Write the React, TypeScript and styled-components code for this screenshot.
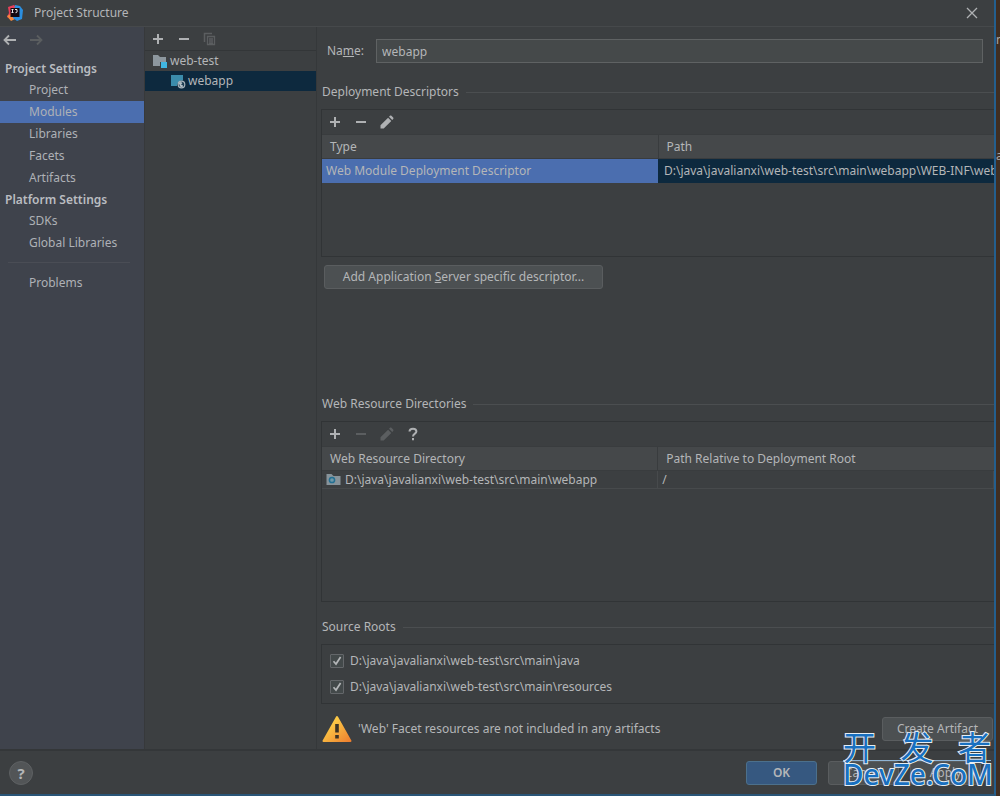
import React from "react";
import styled, { createGlobalStyle, css } from "styled-components";

const GlobalStyle = createGlobalStyle`
  * { box-sizing: border-box; }
  body {
    margin: 0;
    background: #3c3f41;
    color: #b4b6b8;
    font: 12px/18px "Noto Sans", "Noto Sans CJK SC", sans-serif;
  }
  button, input { font: inherit; color: inherit; }
  ul { list-style: none; margin: 0; padding: 0; }
`;

const Screen = styled.div`
  display: flex;
  min-height: 100vh;
  position: relative;
`;

const Dialog = styled.div`
  flex: 1;
  min-width: 0;
  display: flex;
  flex-direction: column;
  background: #3c3f41;
  border-right: 2px solid #245f8e;
  border-bottom: 2px solid #2a5577;
`;

const Backdrop = styled.div`
  display: flex;
  flex-direction: column;
  gap: 98px;
  width: 4px;
  overflow: hidden;
  background: #402e22;
  color: #a9a9a9;
  padding-top: 31px;
`;

const TitleBar = styled.header`
  height: 27px;
  display: flex;
  align-items: center;
  padding: 0 13px 0 6px;
  gap: 10px;
  border-bottom: 1px solid #46494b;
`;

const Title = styled.h1`
  flex: 1;
  margin: 0;
  font-size: 12px;
  font-weight: 400;
`;

const IconButton = styled.button`
  display: flex;
  align-items: center;
  justify-content: center;
  width: 18px;
  height: 18px;
  padding: 0;
  border: 0;
  background: none;
  color: #afb1b3;
  &:disabled { color: #5b5e60; }
`;

const Body = styled.div`
  flex: 1;
  display: flex;
`;

const Sidebar = styled.nav`
  width: 145px;
  flex: none;
  background: #3f434c;
  border-right: 1px solid #37393b;
`;

const History = styled.div`
  display: flex;
  gap: 8px;
  padding: 4px 0 0 1px;
`;

const GroupTitle = styled.h2<{ $first?: boolean }>`
  margin: ${(p) => (p.$first ? 10 : 1)}px 0 0;
  padding-left: 5px;
  font-size: 12px;
  line-height: 20px;
  font-weight: 600;
  color: #babdc1;
`;

const NavLink = styled.a<{ $active?: boolean }>`
  display: block;
  padding-left: 29px;
  line-height: 22px;
  color: #aeb1b6;
  text-decoration: none;
  ${(p) => p.$active && css`background: #4b6eaf;`}
`;

const NavDivider = styled.hr`
  margin: 8px 14px 9px 8px;
  border: 0;
  border-top: 1px solid #4a4d55;
`;

const TreePane = styled.section`
  width: 172px;
  flex: none;
  border-right: 1px solid #35383a;
`;

const Toolbar = styled.div<{ $tree?: boolean }>`
  display: flex;
  align-items: center;
  gap: 8px;
  height: 24px;
  padding-left: 4px;
  ${(p) => p.$tree && css`border-bottom: 1px solid #333638;`}
`;

const TreeRow = styled.li<{ $level: number; $selected?: boolean }>`
  display: flex;
  align-items: center;
  gap: 2px;
  height: 20px;
  padding-left: ${(p) => 7 + p.$level * 18}px;
  ${(p) => p.$selected && css`background: #0d293e;`}
`;

const Content = styled.main`
  flex: 1;
  min-width: 0;
  display: flex;
  flex-direction: column;
  padding-left: 4px;
`;

const NameRow = styled.div`
  display: flex;
  align-items: center;
  padding: 12px 11px 0 6px;
  gap: 12px;
`;

const NameInput = styled.input`
  flex: 1;
  min-width: 0;
  height: 24px;
  padding: 0 5px;
  background: #45494a;
  border: 1px solid #5f6263;
`;

const SectionTitle = styled.h3<{ $top: number }>`
  display: flex;
  align-items: center;
  gap: 7px;
  margin: ${(p) => p.$top}px 0 8px;
  padding-left: 1px;
  font-size: 12px;
  font-weight: 400;
  &::after {
    content: "";
    flex: 1;
    border-top: 1px solid #4b4e50;
  }
`;

const Panel = styled.div<{ $height: number }>`
  min-height: ${(p) => p.$height}px;
  border: 1px solid #313436;
  border-right: 0;
`;

const Table = styled.table`
  width: 100%;
  table-layout: fixed;
  border-collapse: collapse;
  th {
    height: 24px;
    padding: 0 8px;
    text-align: left;
    font-weight: 400;
    background: #45484a;
    border-top: 1px solid #393c3e;
    border-bottom: 1px solid #393c3e;
  }
  th + th { border-left: 1px solid #393c3e; }
`;

const Cell = styled.td<{ $tone?: "active" | "selected" }>`
  height: ${(p) => (p.$tone ? 24 : 18)}px;
  padding: 0 0 0 4px;
  overflow: hidden;
  white-space: nowrap;
  line-height: 16px;
  ${(p) => p.$tone === "active" && css`background: #4b6eaf;`}
  ${(p) => p.$tone === "selected" && css`background: #0d293e; padding-left: 6px;`}
  ${(p) => !p.$tone && css`
    border-bottom: 1px solid #474a4c;
    border-right: 1px solid #474a4c;
  `}
`;

const FileLabel = styled.span`
  display: flex;
  align-items: center;
  gap: 4px;
`;

const Button = styled.button<{ $width: number; $primary?: boolean }>`
  min-width: ${(p) => p.$width}px;
  height: 24px;
  padding: 0 8px;
  line-height: 20px;
  border-radius: 3px;
  background: #4c5052;
  border: 1px solid #5a5d5f;
  white-space: nowrap;
  ${(p) => p.$primary && css`
    background: #365880;
    border-color: #4c708c;
    font-weight: 600;
  `}
`;

const ButtonRow = styled.div`
  display: flex;
  padding: 8px 3px 0;
`;

const RootLabel = styled.label`
  display: flex;
  align-items: center;
  gap: 6px;
  height: 26px;
  padding-left: 8px;
`;

const RootList = styled.div`
  padding-top: 3px;
`;

const CheckBox = styled.input`
  appearance: none;
  width: 14px;
  height: 14px;
  margin: 0;
  border: 1px solid #64676a;
  border-radius: 1px;
  background: #43494a url("data:image/svg+xml,%3Csvg xmlns='http://www.w3.org/2000/svg' viewBox='0 0 12 12'%3E%3Cpath d='M2.5 6.2 5 9l4.6-7' fill='none' stroke='%23b4b6b8' stroke-width='1.7'/%3E%3C/svg%3E");
`;

const WarningRow = styled.div`
  display: flex;
  align-items: center;
  gap: 6px;
  padding: 11px 1px 6px 1px;
`;

const WarningText = styled.p`
  flex: 1;
  margin: 0;
`;

const Footer = styled.footer`
  display: flex;
  align-items: center;
  gap: 11px;
  height: 45px;
  padding: 0 13px 0 9px;
  border-top: 2px solid #343739;
`;

const HelpButton = styled.button`
  width: 24px;
  height: 24px;
  margin-right: auto;
  padding: 0;
  border: 1px solid #5e6163;
  border-radius: 50%;
  background: #525557;
  font-size: 15px;
  font-weight: 700;
`;

const Watermark = styled.div`
  position: absolute;
  right: 9px;
  bottom: 8px;
  width: 148px;
  color: #1870c0;
  -webkit-text-stroke: 2px #e6edf2;
  paint-order: stroke fill;
  pointer-events: none;
`;

const WatermarkTop = styled.div`
  display: flex;
  justify-content: space-between;
  font: 400 33px/28px "Noto Sans CJK SC", sans-serif;
`;

const WatermarkBottom = styled.div`
  font: 500 28px/27px "Noto Sans", sans-serif;
  white-space: nowrap;
  border-top: 1px solid #8fb4d4;
`;

const Plus = () => (
  <svg width="12" height="12" viewBox="0 0 12 12" aria-hidden="true">
    <path d="M6 1v10M1 6h10" stroke="currentColor" strokeWidth="2" />
  </svg>
);

const Minus = () => (
  <svg width="12" height="12" viewBox="0 0 12 12" aria-hidden="true">
    <path d="M1 6h10" stroke="currentColor" strokeWidth="2" />
  </svg>
);

const Pencil = () => (
  <svg width="14" height="14" viewBox="0 0 14 14" fill="currentColor" aria-hidden="true">
    <path d="M.5 13.5v-3.2l7.6-7.6 3.2 3.2-7.6 7.6zM9 1.8l1-1c.4-.4 1-.4 1.400 0l1.800 1.800c.4.4.4 1 0 1.400l-1 1z" />
  </svg>
);

const Copy = () => (
  <svg width="14" height="14" viewBox="0 0 14 14" fill="none" stroke="currentColor" aria-hidden="true">
    <path d="M1.500 10V1.500H9" strokeWidth="1.500" />
    <path d="M4.500 4.500h7v8h-7zM6 7h4M6 9h4M6 11h4" strokeWidth="1.300" />
  </svg>
);

const Arrow = ({ flip }: { flip?: boolean }) => (
  <svg width="14" height="12" viewBox="0 0 14 12" fill="none" stroke="currentColor" strokeWidth="1.800" aria-hidden="true">
    <path d={flip ? "M1 6h11.500M8 1.500 12.500 6 8 10.500" : "M13 6H1.500M6 1.500 1.500 6 6 10.500"} />
  </svg>
);

const Question = () => (
  <svg width="12" height="14" viewBox="0 0 12 14" fill="none" stroke="currentColor" strokeWidth="2" aria-hidden="true">
    <path d="M2.500 4.500C2.500 2.600 4 1.700 6 1.700s3.400 1 3.400 2.800C9.400 6.700 6 6.600 6 9.600M6 11v2.200" />
  </svg>
);

const Logo = () => (
  <svg width="18" height="18" viewBox="0 0 18 18" aria-hidden="true">
    <path d="M2 3 8 1l3 3-3 11-3 1-4-3 2-4z" fill="#e8405a" />
    <path d="m1 12 4-2 4 5-4 2z" fill="#f58a3c" />
    <path d="m9 1 5 1 3 4-1 9-5 2-4-3z" fill="#2b8fe0" />
    <path d="M4.500 4h9v9h-9z" fill="#14090f" />
    <path d="M5.500 5.500h2M6.500 5.500v3M5.500 8.500h2M9 5.500h2v2.500q0 .7-1.500.7" stroke="#e8e8e8" fill="none" />
  </svg>
);

const ModuleFolder = () => (
  <svg width="16" height="16" viewBox="0 0 16 16" aria-hidden="true">
    <path d="M1 2h5l2 2h6v5H8v4H1z" fill="#8d979e" />
    <path d="M9 9h6v6H9z" fill="#40b6e0" />
  </svg>
);

const WebFacet = () => (
  <svg width="16" height="16" viewBox="0 0 16 16" aria-hidden="true">
    <path d="M1 2h12v5.500q-5-.5-6 5.500H1z" fill="#3b8cab" />
    <circle cx="11.500" cy="11.500" r="3.300" fill="#1b3b50" stroke="#a9b4bb" strokeWidth="1.200" />
    <path d="M8.700 9.500 11 9l1.500 1-1.500 1.500 2 1-.5 2-2.500-1z" fill="#b5c0c6" />
  </svg>
);

const WebFolder = () => (
  <svg width="15" height="14" viewBox="0 0 15 14" aria-hidden="true">
    <path d="M.5 1h5l2 2h7v9H.5z" fill="#87939a" />
    <circle cx="6" cy="7" r="2.600" fill="#6f98a8" stroke="#236f92" strokeWidth="1.500" />
  </svg>
);

const Warning = () => (
  <svg width="30" height="28" viewBox="0 0 30 28" aria-hidden="true">
    <defs>
      <linearGradient id="amber" x1="0" y1="0" x2="1" y2="1">
        <stop offset="0.300" stopColor="#fbc745" />
        <stop offset="1" stopColor="#ee7f2f" />
      </linearGradient>
    </defs>
    <path d="M15 2 28.500 26H1.500z" fill="url(#amber)" stroke="url(#amber)" strokeWidth="2" strokeLinejoin="round" />
    <path d="M15 9v8.500M15 20v3.500" stroke="#3b3325" strokeWidth="3.600" />
  </svg>
);

const Close = () => (
  <svg width="12" height="12" viewBox="0 0 12 12" stroke="currentColor" strokeWidth="1.300" aria-hidden="true">
    <path d="m1 1 10 10M11 1 1 11" />
  </svg>
);

const projectLinks = ["Project", "Modules", "Libraries", "Facets", "Artifacts"];
const platformLinks = ["SDKs", "Global Libraries"];
const sourceRoots = [
  "D:\\java\\javalianxi\\web-test\\src\\main\\java",
  "D:\\java\\javalianxi\\web-test\\src\\main\\resources",
];

export default function App() {
  return (
    <Screen>
      <GlobalStyle />
      <Dialog>
        <TitleBar>
          <Logo />
          <Title>Project Structure</Title>
          <IconButton aria-label="Close"><Close /></IconButton>
        </TitleBar>
        <Body>
          <Sidebar>
            <History>
              <IconButton aria-label="Back"><Arrow /></IconButton>
              <IconButton aria-label="Forward" disabled><Arrow flip /></IconButton>
            </History>
            <GroupTitle $first>Project Settings</GroupTitle>
            {projectLinks.map((name) => (
              <NavLink key={name} href="#" $active={name === "Modules"}>{name}</NavLink>
            ))}
            <GroupTitle>Platform Settings</GroupTitle>
            {platformLinks.map((name) => (
              <NavLink key={name} href="#">{name}</NavLink>
            ))}
            <NavDivider />
            <NavLink href="#">Problems</NavLink>
          </Sidebar>
          <TreePane>
            <Toolbar $tree>
              <IconButton aria-label="Add module"><Plus /></IconButton>
              <IconButton aria-label="Remove module"><Minus /></IconButton>
              <IconButton aria-label="Copy module" disabled><Copy /></IconButton>
            </Toolbar>
            <ul>
              <TreeRow $level={0}><ModuleFolder />web-test</TreeRow>
              <TreeRow $level={1} $selected><WebFacet />webapp</TreeRow>
            </ul>
          </TreePane>
          <Content>
            <NameRow>
              <label htmlFor="facet-name">Na<u>m</u>e:</label>
              <NameInput id="facet-name" defaultValue="webapp" />
            </NameRow>
            <SectionTitle $top={20}>Deployment Descriptors</SectionTitle>
            <Panel $height={148}>
              <Toolbar>
                <IconButton aria-label="Add descriptor"><Plus /></IconButton>
                <IconButton aria-label="Remove descriptor"><Minus /></IconButton>
                <IconButton aria-label="Edit descriptor"><Pencil /></IconButton>
              </Toolbar>
              <Table>
                <thead><tr><th>Type</th><th>Path</th></tr></thead>
                <tbody>
                  <tr>
                    <Cell $tone="active">Web Module Deployment Descriptor</Cell>
                    <Cell $tone="selected">D:\java\javalianxi\web-test\src\main\webapp\WEB-INF\web.xml</Cell>
                  </tr>
                </tbody>
              </Table>
            </Panel>
            <ButtonRow>
              <Button $width={279}>Add Application <u>S</u>erver specific descriptor...</Button>
            </ButtonRow>
            <SectionTitle $top={106}>Web Resource Directories</SectionTitle>
            <Panel $height={181}>
              <Toolbar>
                <IconButton aria-label="Add directory"><Plus /></IconButton>
                <IconButton aria-label="Remove directory" disabled><Minus /></IconButton>
                <IconButton aria-label="Edit directory" disabled><Pencil /></IconButton>
                <IconButton aria-label="Help on directories"><Question /></IconButton>
              </Toolbar>
              <Table>
                <thead>
                  <tr><th>Web Resource Directory</th><th>Path Relative to Deployment Root</th></tr>
                </thead>
                <tbody>
                  <tr>
                    <Cell><FileLabel><WebFolder />D:\java\javalianxi\web-test\src\main\webapp</FileLabel></Cell>
                    <Cell>/</Cell>
                  </tr>
                </tbody>
              </Table>
            </Panel>
            <SectionTitle $top={16}>Source Roots</SectionTitle>
            <Panel $height={60}>
              <RootList>
                {sourceRoots.map((path) => (
                  <RootLabel key={path}><CheckBox type="checkbox" defaultChecked />{path}</RootLabel>
                ))}
              </RootList>
            </Panel>
            <WarningRow>
              <Warning />
              <WarningText>'Web' Facet resources are not included in any artifacts</WarningText>
              <Button $width={111}>Create Artifact</Button>
            </WarningRow>
          </Content>
        </Body>
        <Footer>
          <HelpButton aria-label="Help">?</HelpButton>
          <Button $width={71} $primary>OK</Button>
          <Button $width={71}>Cancel</Button>
          <Button $width={71}>Apply</Button>
        </Footer>
      </Dialog>
      <Backdrop aria-hidden="true"><span>n</span><span>a</span></Backdrop>
      <Watermark>
        <WatermarkTop><span>开</span><span>发</span><span>者</span></WatermarkTop>
        <WatermarkBottom>DevZe.CoM</WatermarkBottom>
      </Watermark>
    </Screen>
  );
}
